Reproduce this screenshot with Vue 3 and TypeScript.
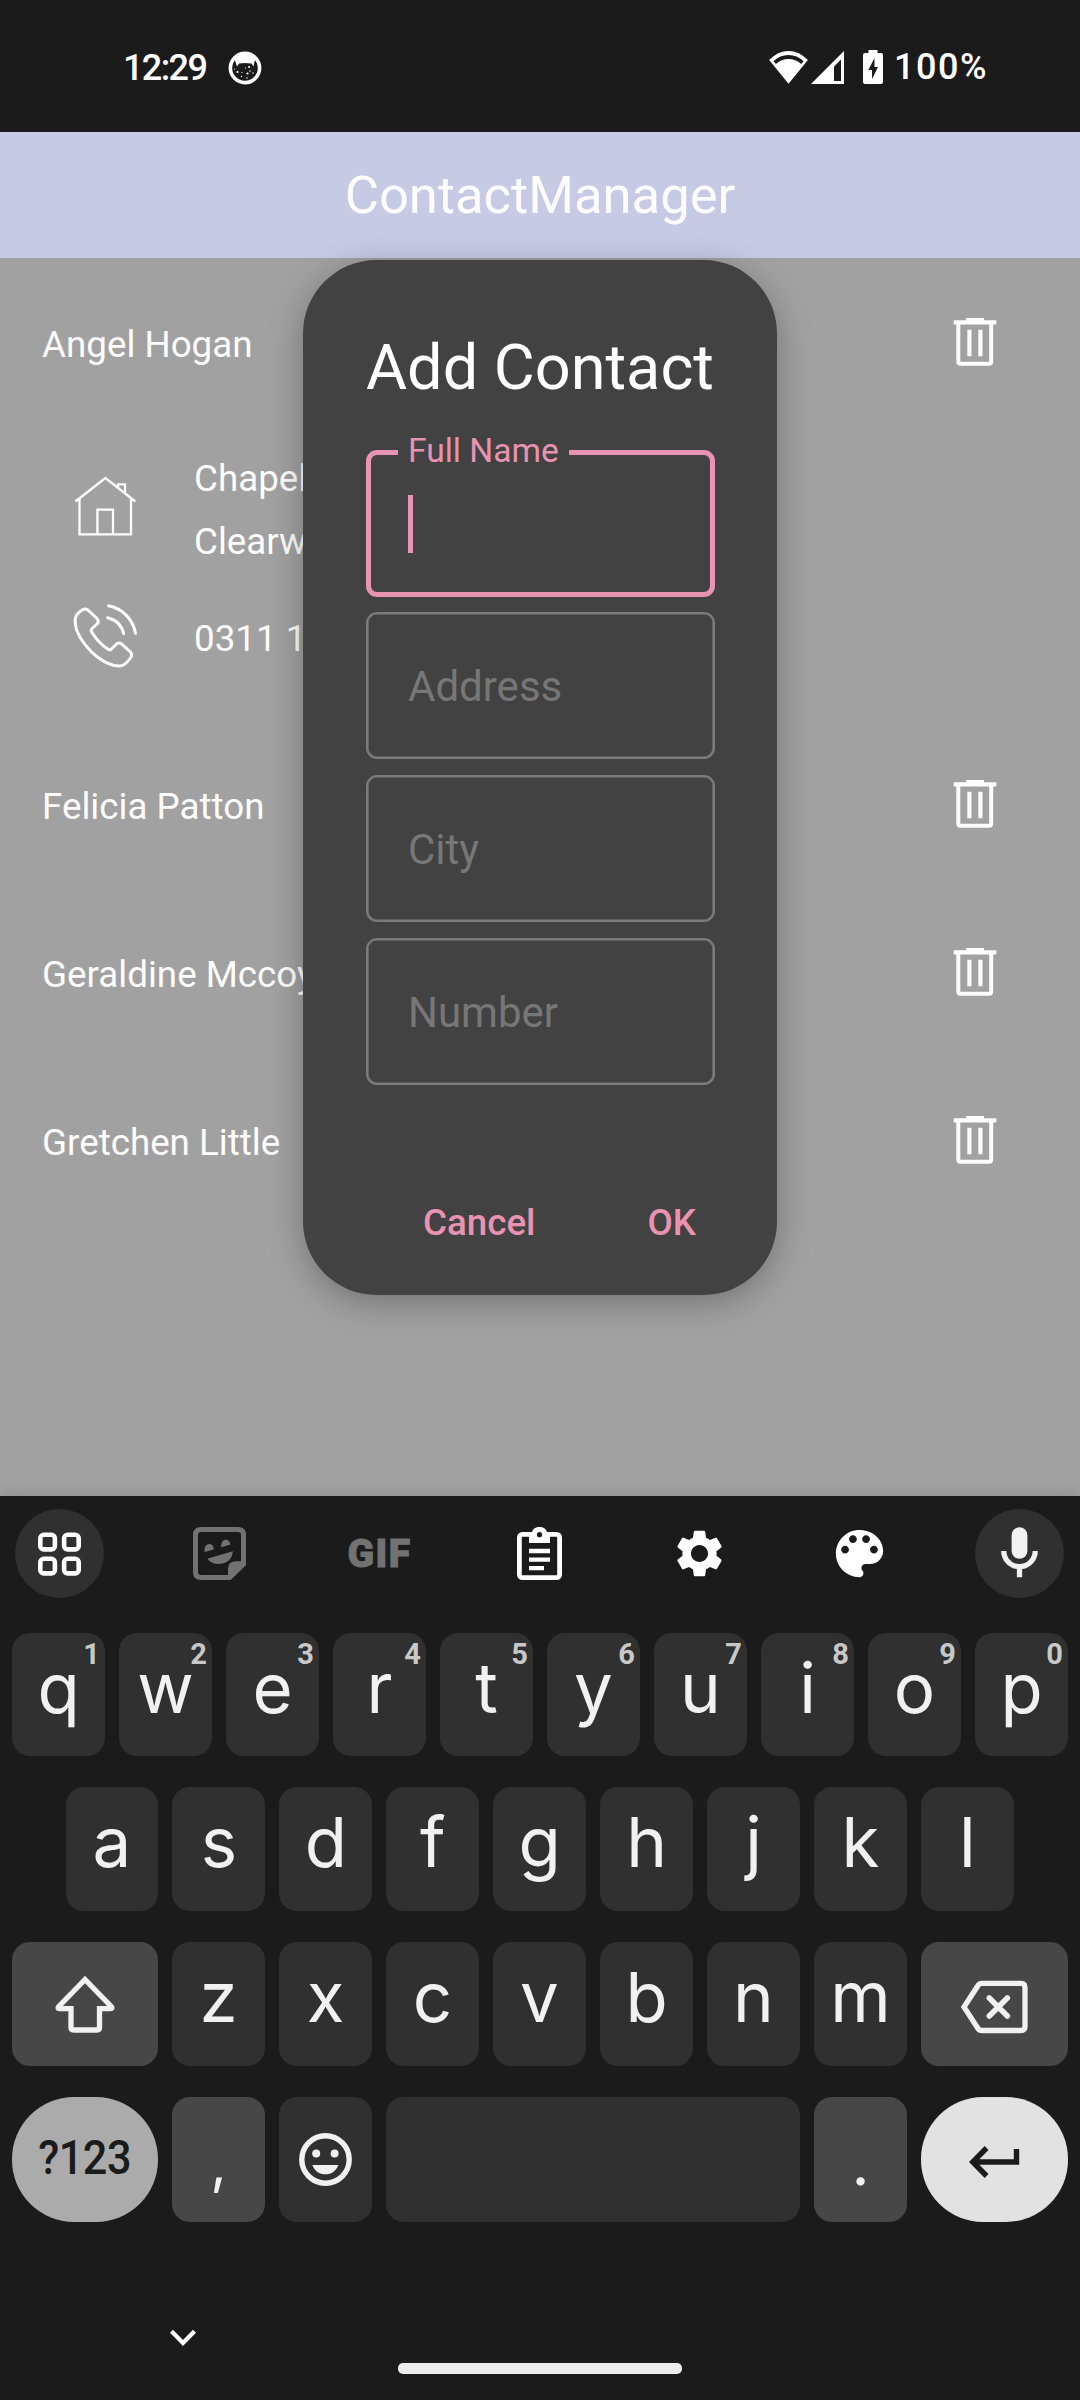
<script setup lang="ts">
interface Key {
  label: string
  hint?: string
}

const toKeys = (letters: string): Key[] => letters.split('').map((label) => ({ label }))

const topRow: Key[] = 'qwertyuiop'.split('').map((label, i) => ({ label, hint: String((i + 1) % 10) }))
const middleRow: Key[] = toKeys('asdfghjkl')
const bottomRow: Key[] = toKeys('zxcvbnm')

const contacts: { name: string; open: boolean }[] = [
  { name: 'Angel Hogan', open: true },
  { name: 'Felicia Patton', open: false },
  { name: 'Geraldine Mccoy', open: false },
  { name: 'Gretchen Little', open: false },
]

const emptyFields: string[] = ['Address', 'City', 'Number']
</script>

<template>
  <div class="screen">
    <header class="status">
      <div class="status-left">
        <span class="clock">12:29</span>
        <svg class="cat" viewBox="227 51 34 34" width="34" height="34">
          <circle cx="244" cy="68" r="14.6" fill="#1b1b1b" stroke="#fff" stroke-width="3.6" />
          <path d="M233.5 59Q238 53 244 53T254.500 59L253 63.500L252.500 66.500L250.500 63.500Q244 62.500 238 63.500L236 66.500L235 63.500Z" fill="#fff" />
          <g fill="#fff">
            <circle cx="236.500" cy="72" r="1.1" />
            <circle cx="246.500" cy="73.500" r="1.1" />
            <circle cx="248" cy="67" r="1" />
            <circle cx="240.500" cy="76.500" r=".7" />
            <circle cx="244.500" cy="68" r=".6" />
            <circle cx="252" cy="73" r=".7" />
            <circle cx="241" cy="72.500" r=".6" />
            <circle cx="246" cy="78" r=".7" />
            <circle cx="233.500" cy="69" r=".6" />
            <circle cx="249" cy="71" r=".7" />
          </g>
        </svg>
      </div>
      <div class="status-right">
        <svg viewBox="768 48 78 36" width="78" height="36">
          <path d="M788.500 82.700L769.200 59Q778 50 788.500 50T807.900 59Z" fill="#fff" />
          <path d="M773.500 60.200Q780 54 788.500 54T803.600 60.200L801.200 63Q795.500 58 788.500 58T776 63Z" fill="#1b1b1b" />
          <path d="M811 83L844 50V83Z" fill="#fff" />
          <path d="M834 65.500L841 58.500V80H834Z" fill="#1b1b1b" />
        </svg>
        <svg class="battery" viewBox="863 48 20 36" width="20" height="36">
          <path d="M868.500 49H877.500V52H881Q883 52 883 54V81Q883 83 881 83H865Q863 83 863 81V54Q863 52 865 52H868.500Z" fill="#fff" />
          <path d="M874.500 57L868.300 69H872V78L878 66H874.500Z" fill="#1b1b1b" />
        </svg>
        <span class="percent">100%</span>
      </div>
    </header>

    <main class="app">
      <h1 class="app-bar">ContactManager</h1>
      <section class="list">
        <template v-for="c in contacts" :key="c.name">
          <div class="contact">
            <span>{{ c.name }}</span>
            <svg viewBox="953 317 44 50" width="44" height="50">
              <path d="M966 318H984V320.300H996.300V324.400H953.700V320.300H966Z" fill="#fdfdfd" />
              <path d="M958.300 323V361.500Q958.300 363.700 960.500 363.700H989Q991.200 363.700 991.200 361.500V323" fill="none" stroke="#fdfdfd" stroke-width="4" />
              <path d="M969.400 329.700V356.300M980.400 329.700V356.300" stroke="#fdfdfd" stroke-width="4.200" />
            </svg>
          </div>
          <div v-if="c.open" class="details">
            <div class="detail address">
              <svg viewBox="73 474 64 64" width="64" height="64" fill="none" stroke="#fdfdfd" stroke-width="2.300">
                <path d="M75.400 501.500L105.400 478L135.400 501.500M79.500 499V534.300H131V499M97.400 534V509.700H113V534M118 487.500V484.300H125V493" />
              </svg>
              <div>
                <p>Chapel</p>
                <p>Clearw</p>
              </div>
            </div>
            <div class="detail phone">
              <svg viewBox="73 603 66 66" width="66" height="66" fill="none" stroke="#fdfdfd" stroke-width="3" stroke-linecap="round" stroke-linejoin="round">
                <path d="M75.800 617C76.500 614 80 611.500 82.500 609.800Q85.500 608.200 88 610.200L97 618.500Q99.300 621 97.500 623.500L91.700 629Q90.700 630.600 91.700 632C96 639 102 645.500 108.500 649.500Q110 650.300 111.500 649L116.500 644Q119 642 121.500 643.900L130.500 652Q132.700 655 130.800 657.500C128 661.500 124.500 665.500 121 665.800C113.500 666.700 105 662.500 98 657.500C89 651 80.500 640 77 631Q75 625 75.100 620Z" />
                <path d="M108.500 605.800C122 608.300 133 619 135.500 633.200M107.600 617.800C115.500 619.500 121.500 625 123.700 633.700" />
              </svg>
              <p>0311 1</p>
            </div>
          </div>
        </template>
      </section>

      <div class="dialog">
        <h2>Add Contact</h2>
        <div class="fields">
          <div class="field focused">
            <span class="float-label">Full Name</span>
            <i class="caret"></i>
          </div>
          <div v-for="f in emptyFields" :key="f" class="field">{{ f }}</div>
        </div>
        <div class="actions">
          <span>Cancel</span>
          <span>OK</span>
        </div>
      </div>
    </main>

    <section class="keyboard">
      <div class="toolbar">
        <div class="tool round">
          <svg viewBox="38 1531 43 44" width="43" height="44" fill="none" stroke="#fff" stroke-width="4.600">
            <rect x="40.300" y="1533.800" width="14.600" height="14.600" rx="3.500" />
            <rect x="64.100" y="1533.800" width="14.600" height="14.600" rx="3.500" />
            <rect x="40.300" y="1557.800" width="14.600" height="14.600" rx="3.500" />
            <rect x="64.100" y="1557.800" width="14.600" height="14.600" rx="3.500" />
          </svg>
        </div>
        <div class="tool">
          <svg viewBox="193 1527 53 53" width="53" height="53">
            <path d="M243.500 1564V1535Q243.500 1529.500 238 1529.500H201Q195.500 1529.500 195.500 1535V1572Q195.500 1577.500 201 1577.500H229.500Z" fill="none" stroke="#727272" stroke-width="5" />
            <path d="M245.900 1561.300H236Q228 1561.300 228 1569.500V1580H230.500L246 1564.700Z" fill="#727272" />
            <path d="M204.700 1552C203 1543 213 1541 214 1549.300ZM221.300 1547.300C220 1538.500 229.500 1537 230.500 1544.500ZM207.300 1558.700L232.800 1551.300C232.500 1565 214 1568 207.300 1558.700Z" fill="#727272" />
          </svg>
        </div>
        <div class="tool gif">GIF</div>
        <div class="tool">
          <svg viewBox="517 1527 45 53" width="45" height="53">
            <rect x="519.400" y="1534.400" width="40.200" height="43.200" rx="3" fill="none" stroke="#fff" stroke-width="4.800" />
            <path d="M529 1543V1532.500H532C533 1525.200 546 1525.200 547 1532.500H550V1543Z" fill="#fff" />
            <circle cx="539.500" cy="1534.700" r="2.600" fill="#1b1b1b" />
            <path d="M529 1551H550M529 1559.700H550M529 1568.200H544" stroke="#fff" stroke-width="4.300" />
          </svg>
        </div>
        <div class="tool">
          <svg viewBox="0 0 24 24" width="57" height="57" fill="#fff">
            <path d="M19.140 12.940c.04-.3.060-.61.060-.94 0-.32-.02-.64-.07-.94l2.030-1.580c.18-.14.230-.41.120-.61l-1.920-3.320c-.12-.22-.37-.29-.59-.22l-2.390.960c-.5-.38-1.030-.7-1.620-.94l-.36-2.540c-.04-.24-.24-.41-.48-.41h-3.840c-.24 0-.43.170-.47.410l-.36 2.540c-.59.240-1.130.570-1.620.940l-2.390-.96c-.22-.08-.47 0-.59.220L2.740 8.870c-.12.210-.08.470.120.610l2.030 1.580c-.05.300-.09.630-.09.940s.02.640.070.940l-2.030 1.580c-.18.140-.23.410-.12.610l1.920 3.320c.12.220.37.290.59.220l2.390-.96c.5.380 1.030.7 1.620.940l.36 2.540c.05.240.24.410.48.410h3.840c.24 0 .44-.17.470-.41l.36-2.540c.59-.24 1.130-.56 1.620-.94l2.390.960c.22.080.47 0 .59-.22l1.920-3.320c.12-.22.070-.47-.12-.61l-2.010-1.580zM12 15.600c-1.980 0-3.600-1.620-3.600-3.600s1.620-3.600 3.600-3.600 3.600 1.620 3.600 3.600-1.620 3.600-3.600 3.600z" />
          </svg>
        </div>
        <div class="tool">
          <svg viewBox="0 0 24 24" width="63" height="63" fill="#fff">
            <path d="M12 3c-4.970 0-9 4.030-9 9s4.030 9 9 9c.83 0 1.500-.67 1.500-1.500 0-.39-.15-.74-.39-1.010-.23-.26-.38-.61-.38-.99 0-.83.670-1.500 1.500-1.500H16c2.760 0 5-2.240 5-5 0-4.420-4.030-8-9-8zm-5.500 9c-.83 0-1.500-.67-1.500-1.500S5.670 9 6.500 9 8 9.670 8 10.500 7.330 12 6.500 12zm3-4C8.670 8 8 7.330 8 6.500S8.670 5 9.500 5s1.500.67 1.500 1.500S10.330 8 9.500 8zm5 0c-.83 0-1.500-.67-1.500-1.500S13.670 5 14.500 5s1.500.67 1.500 1.500S15.330 8 14.500 8zm3 4c-.83 0-1.500-.67-1.500-1.500S16.670 9 17.500 9s1.500.67 1.500 1.500-.67 1.500-1.500 1.500z" />
          </svg>
        </div>
        <div class="tool round">
          <svg viewBox="0 0 24 24" width="63" height="63" fill="#f1f1f1">
            <rect x="9" y="2" width="6" height="12" rx="3" />
            <path d="M5 11C5 14.530 7.610 17.430 11 17.920V21H13V17.920C16.390 17.430 19 14.530 19 11H17C17 13.760 14.760 16 12 16S7 13.760 7 11Z" />
          </svg>
        </div>
      </div>

      <div class="row first">
        <div v-for="k in topRow" :key="k.label" class="key letter">
          {{ k.label }}<span class="hint">{{ k.hint }}</span>
        </div>
      </div>
      <div class="row inset">
        <div v-for="k in middleRow" :key="k.label" class="key letter">{{ k.label }}</div>
      </div>
      <div class="row">
        <div class="key mod wide">
          <svg viewBox="54 1973 62 61" width="62" height="61" fill="none" stroke="#f1f1f1" stroke-width="5.300">
            <path d="M85 1978.500L58.800 2005.500Q57 2007.700 59.500 2007.700H71V2026.500Q71 2029 73.500 2029H97Q99.500 2029 99.500 2026.500V2007.700H110.500Q113 2007.700 111.200 2005.500Z" />
          </svg>
        </div>
        <div v-for="k in bottomRow" :key="k.label" class="key letter">{{ k.label }}</div>
        <div class="key mod wide end">
          <svg class="backspace" viewBox="960 1980 67 54" width="67" height="54" fill="none" stroke="#f1f1f1" stroke-width="5.300">
            <path d="M963 2007L977 1985.500Q978.300 1983.400 981 1983.400H1020Q1024 1983.400 1024 1987.400V2026.500Q1024 2030.500 1020 2030.500H981Q978.300 2030.500 977 2028.500Z" />
            <path d="M988.300 1998L1006.300 2016M1006.300 1998L988.300 2016" stroke-linecap="round" stroke-width="5.600" />
          </svg>
        </div>
      </div>
      <div class="row last">
        <div class="key symbols wide"><span>?123</span></div>
        <div class="key mod comma">,</div>
        <div class="key">
          <svg viewBox="299 2132.500 53 53" width="53" height="53" fill="#f1f1f1">
            <circle cx="325.500" cy="2159" r="23.700" fill="none" stroke="#f1f1f1" stroke-width="5.400" />
            <circle cx="316.200" cy="2153" r="4" />
            <circle cx="334.600" cy="2153" r="4" />
            <path d="M312.300 2164.500H338.500C336 2170.500 331.500 2173.800 325.400 2173.800S314.500 2170.500 312.300 2164.500Z" />
          </svg>
        </div>
        <div class="key space"></div>
        <div class="key mod period">.</div>
        <div class="key enter wide end">
          <svg viewBox="968 2142 52 40" width="52" height="40" fill="none" stroke="#1b1b1b" stroke-width="5.400">
            <path d="M1015.500 2149V2162H972M985.600 2148L971.800 2162L985.600 2176" />
          </svg>
        </div>
      </div>
      <div class="nav">
        <svg viewBox="168 2327 30 22" width="30" height="22" fill="none" stroke="#fff" stroke-width="4.200">
          <path d="M171.500 2331.200L183 2343L194.500 2331.200" />
        </svg>
        <div class="home"></div>
      </div>
    </section>
  </div>
</template>

<style>
body {
  margin: 0;
  background: #1b1b1b;
}
</style>

<style scoped>
.screen {
  width: 1080px;
  height: 2400px;
  display: flex;
  flex-direction: column;
  background: #1b1b1b;
  font-family: Roboto, "Liberation Sans", sans-serif;
  overflow: hidden;
}
h1, h2, p {
  margin: 0;
  font-weight: 400;
}
svg {
  display: block;
  flex: none;
}
.status {
  height: 132px;
  flex: none;
  box-sizing: border-box;
  padding: 0 92px 0 123px;
  display: flex;
  justify-content: space-between;
  color: #fff;
  font-size: 36px;
  font-weight: 500;
}
.status-left, .status-right {
  display: flex;
  align-items: center;
  height: 135px;
}
.clock {
  letter-spacing: -1.600px;
  width: 104.500px;
}
.status-right {
  height: 133px;
}
.battery {
  margin: 0 11px 0 17px;
}
.percent {
  letter-spacing: 1.500px;
  width: 94px;
}
.app {
  position: relative;
  height: 1364px;
  flex: none;
  display: flex;
  flex-direction: column;
  background: #a1a1a1;
  overflow: hidden;
}
.app-bar {
  height: 126px;
  line-height: 126px;
  text-align: center;
  font-size: 52.500px;
  color: #fdfdfd;
  background: #c7cae4;
}
.list {
  display: flex;
  flex-direction: column;
  color: #fdfdfd;
  font-size: 36.750px;
}
.contact {
  height: 168px;
  padding: 0 83px 0 42px;
  display: flex;
  align-items: center;
  justify-content: space-between;
}
.contact span {
  padding-top: 5px;
}
.details {
  height: 294px;
  display: flex;
  flex-direction: column;
  box-sizing: border-box;
  padding: 20.500px 0 0 73px;
}
.detail {
  display: flex;
  line-height: 63px;
}
.address svg {
  margin: 27.500px 57px 0 0;
}
.phone {
  margin-top: 30.500px;
  align-items: flex-start;
}
.phone svg {
  margin-right: 55px;
}
.phone p {
  padding-top: 3.500px;
}
.dialog {
  position: absolute;
  left: 303px;
  top: 128px;
  width: 474px;
  height: 1035px;
  box-sizing: border-box;
  padding: 66px 62px 0 63px;
  border-radius: 73.500px;
  background: #424242;
  box-shadow: 0 8px 34px rgba(0, 0, 0, .28);
  display: flex;
  flex-direction: column;
}
.dialog h2 {
  font-size: 63px;
  line-height: 83px;
  color: #fff;
  white-space: nowrap;
}
.fields {
  margin-top: 41px;
  display: flex;
  flex-direction: column;
  gap: 16px;
}
.field {
  position: relative;
  height: 147px;
  box-sizing: border-box;
  border: 2px solid #7b7b7b;
  box-shadow: inset 0 0 0 .6px #7b7b7b;
  border-radius: 11px;
  padding: 2px 0 0 40px;
  display: flex;
  align-items: center;
  font-size: 42px;
  color: #777;
}
.focused {
  margin-bottom: -1px;
  border: 5px solid #e893b1;
  box-shadow: none;
  padding: 0 0 0 37px;
}
.float-label {
  position: absolute;
  left: 27px;
  top: -24px;
  padding: 0 10px;
  line-height: 40px;
  font-size: 33.600px;
  color: #e893b1;
  background: #424242;
}
.caret {
  width: 5px;
  height: 58px;
  background: #e893b1;
}
.actions {
  margin-top: 101px;
  height: 73px;
  display: flex;
  align-items: center;
  justify-content: flex-end;
  gap: 112px;
  padding-right: 19px;
  font-size: 36.750px;
  font-weight: 500;
  color: #e893b1;
}
.keyboard {
  flex: 1;
  display: flex;
  flex-direction: column;
  background: #1b1b1b;
  box-shadow: 0 0 16px rgba(0, 0, 0, .12);
  position: relative;
}
.toolbar {
  height: 124px;
  padding: 13px 16px 0 15px;
  display: flex;
  justify-content: space-between;
}
.tool {
  width: 89px;
  height: 89px;
  display: flex;
  align-items: center;
  justify-content: center;
}
.round {
  border-radius: 50%;
  background: #303030;
}
.gif {
  color: #727272;
  font-weight: 900;
  font-size: 39px;
  letter-spacing: 1.500px;
  -webkit-text-stroke: 1px #727272;
}
.row {
  display: flex;
  gap: 14px;
  padding: 0 12px;
  height: 124px;
  margin-bottom: 31px;
}
.first {
  height: 123px;
}
.inset {
  padding: 0 66px 0 65.500px;
}
.last {
  height: 125px;
  margin-bottom: 0;
}
.key {
  position: relative;
  flex: 1 1 0;
  border-radius: 18px;
  background: #303030;
  color: #f1f1f1;
  display: flex;
  align-items: center;
  justify-content: center;
}
.letter {
  box-sizing: border-box;
  padding-bottom: 14px;
  font-family: Inter, Roboto, sans-serif;
  font-size: 69px;
  line-height: 90px;
}
.hint {
  position: absolute;
  right: 5px;
  top: 3px;
  line-height: 36px;
  font-family: Roboto, sans-serif;
  font-size: 29px;
  font-weight: 700;
  color: #c8c8c8;
}
.wide {
  flex: 0 0 146px;
}
.end {
  flex-basis: 147px;
}
.mod {
  background: #474747;
}
.backspace {
  margin: 5px 0 0 -1px;
}
.symbols {
  border-radius: 62px;
  background: #ababab;
  color: #1b1b1b;
  font-size: 48px;
  font-weight: 500;
  line-height: 120px;
  box-sizing: border-box;
  padding-bottom: 4px;
}
.symbols span {
  letter-spacing: -.500px;
  transform: scaleX(.9);
}
.comma, .period {
  font-family: Lato, Roboto, sans-serif;
  font-size: 66px;
  line-height: 80px;
}
.comma {
  font-family: Inter, Roboto, sans-serif;
  font-size: 56px;
  box-sizing: border-box;
  padding-top: 6px;
}
.space {
  flex: 0 0 414px;
}
.enter {
  border-radius: 62px;
  background: #e2e2e2;
}
.enter svg {
  margin: 5px 0 0 0;
}
.nav {
  flex: 1;
  display: flex;
  flex-direction: column;
  align-items: center;
}
.nav svg {
  align-self: flex-start;
  margin: 105px 0 0 168px;
}
.home {
  width: 284px;
  height: 11px;
  margin-top: 14px;
  border-radius: 5px;
  background: #ececec;
}
</style>
